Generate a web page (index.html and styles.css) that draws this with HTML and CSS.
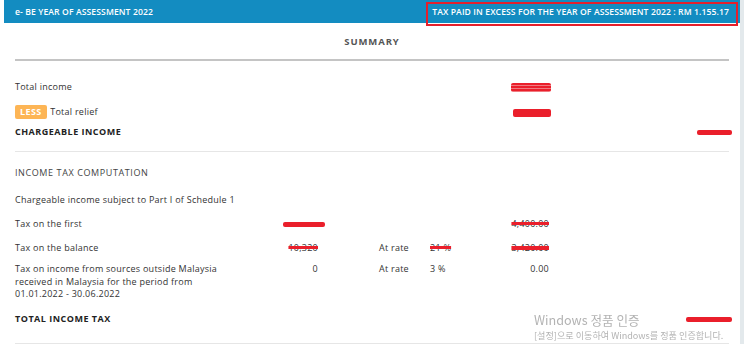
FILE: index.html
```html
<!DOCTYPE html>
<html lang="en">
<head>
    <meta charset="UTF-8">
    <title>e-BE Summary</title>
    <link rel="stylesheet" href="styles.css">
</head>
<body>
    <div class="page">
        <div class="topbar">
            <span class="form-title">e- BE YEAR OF ASSESSMENT 2022</span>
            <span class="excess">TAX PAID IN EXCESS FOR THE YEAR OF ASSESSMENT 2022 : RM 1.155.17</span>
        </div>
        <div class="mark-box"></div>

        <div class="panel">
            <div class="panel-title">SUMMARY</div>

            <div class="summary">
                <div class="srow row-income">
                    <span class="label">Total income</span>
                    <span class="amt"><i class="scribble s-income"></i></span>
                </div>
                <div class="srow row-relief">
                    <span class="label"><span class="badge">LESS</span> Total relief</span>
                    <span class="amt"><i class="scribble s-relief"></i></span>
                </div>
                <div class="srow row-charge strong">
                    <span class="label">CHARGEABLE INCOME</span>
                    <span class="amt-far"><i class="scribble s-charge"></i></span>
                </div>
            </div>

            <div class="section-title">INCOME TAX COMPUTATION</div>
            <div class="calc">
                <div class="c-label c-head">Chargeable income subject to Part I of Schedule 1</div>

                <div class="c-label">Tax on the first</div>
                <div class="c-val"><i class="scribble s-first"></i></div>
                <div class="c-rate-lbl"></div>
                <div class="c-rate"></div>
                <div class="c-amt"><span class="strike">4,400.00</span></div>

                <div class="c-label">Tax on the balance</div>
                <div class="c-val"><span class="strike">10,320</span></div>
                <div class="c-rate-lbl">At rate</div>
                <div class="c-rate"><span class="strike">21 %</span></div>
                <div class="c-amt"><span class="strike heavy">3,420.00</span></div>

                <div class="c-label c-multi">Tax on income from sources outside Malaysia<br>received in Malaysia for the period from<br>01.01.2022 - 30.06.2022</div>
                <div class="c-val c-top">0</div>
                <div class="c-rate-lbl c-top">At rate</div>
                <div class="c-rate c-top">3 %</div>
                <div class="c-amt c-top">0.00</div>
            </div>

            <div class="srow row-total strong">
                <span class="label">TOTAL INCOME TAX</span>
                <span class="amt-far"><i class="scribble s-total"></i></span>
            </div>
            <div class="rule"></div>
        </div>
    </div>

    <div class="watermark">
        <div class="wm-big">Windows 정품 인증</div>
        <div class="wm-small">[설정]으로 이동하여 Windows를 정품 인증합니다.</div>
    </div>
</body>
</html>
```

FILE: styles.css
```css
html, body {
    margin: 0;
    padding: 0;
    background: #fff;
    font-family: "Open Sans", "Noto Sans", sans-serif;
    color: #333;
    font-size: 9px;
    letter-spacing: 0.25px;
}
.page {
    position: relative;
    width: 736px;
    margin-left: 4px;
    border-right: 4px solid #e3e9ec;
}
.topbar {
    display: flex;
    justify-content: space-between;
    align-items: center;
    height: 23px;
    padding: 0 11px;
    background: #138cc1;
    color: #fff;
    font-weight: 600;
    font-size: 8.6px;
    letter-spacing: 0.1px;
}
.mark-box {
    position: absolute;
    left: 422px;
    top: 2px;
    width: 308px;
    height: 20px;
    border: 2px solid #e4202c;
}
.panel {
    padding: 0 11px;
}
.panel-title {
    height: 36px;
    line-height: 38px;
    text-align: center;
    font-weight: 700;
    font-size: 9.5px;
    letter-spacing: 0.9px;
    color: #555;
    border-bottom: 2px solid #c4c4c4;
}
.summary {
    padding-top: 16px;
    padding-bottom: 13px;
    border-bottom: 1px solid #e6e6e6;
}
.srow {
    display: flex;
    align-items: center;
}
.row-income { height: 18px; }
.row-relief { height: 14px; margin-top: 10px; }
.row-charge { height: 14px; margin-top: 5px; }
.strong .label {
    font-weight: 700;
    letter-spacing: 0.5px;
    color: #222;
}
.label {
    width: 496px;
    flex: none;
}
.amt {
    width: 40px;
    text-align: right;
}
.amt-far {
    flex: 1;
    text-align: right;
    margin-right: -3px;
}
.badge {
    display: inline-block;
    padding: 0 5px;
    height: 14px;
    line-height: 14px;
    background: #fdb555;
    color: #fff;
    font-weight: 700;
    border-radius: 2px;
    margin-right: 1px;
    letter-spacing: 0.4px;
}
.section-title {
    height: 20px;
    line-height: 20px;
    margin-top: 11px;
    letter-spacing: 0.6px;
    color: #444;
}
.calc {
    display: grid;
    grid-template-columns: 250px 53px 112px 50px 69px;
    grid-template-rows: 24px 24px 24px auto;
    align-items: center;
    padding-top: 4px;
}
.c-head {
    grid-column: 1 / -1;
}
.c-multi, .c-top {
    align-self: start;
    line-height: 12.5px;
    padding-top: 4px;
}
.c-val { text-align: right; }
.c-rate-lbl { padding-left: 61px; }
.c-amt { text-align: right; }
.row-total {
    height: 16px;
    margin-top: 10px;
}
.rule {
    margin-top: 16px;
    border-top: 1px solid #e6e6e6;
}
.scribble {
    display: inline-block;
    vertical-align: middle;
    background: #ea1f2b;
    border-radius: 2px;
}
.s-income {
    width: 40px;
    height: 9px;
    background: repeating-linear-gradient(#ea1f2b 0 2px, #f07a80 2px 3px);
}
.s-relief { width: 38px; height: 8px; }
.s-charge { width: 35px; height: 5px; }
.s-first { width: 42px; height: 5px; margin-right: -7px; }
.s-total { width: 46px; height: 5px; }
.strike {
    text-decoration: line-through;
    text-decoration-color: #ea1f2b;
    text-decoration-thickness: 3px;
}
.strike.heavy {
    text-decoration-thickness: 4px;
}
.watermark {
    position: fixed;
    left: 534px;
    top: 312px;
    color: #b3b3b3;
    font-family: "Noto Sans CJK KR", "Noto Sans", sans-serif;
    letter-spacing: 0;
}
.wm-big {
    font-size: 12.6px;
    line-height: 16px;
}
.wm-small {
    font-size: 9.1px;
    line-height: 11px;
    margin-top: 2px;
}
```
